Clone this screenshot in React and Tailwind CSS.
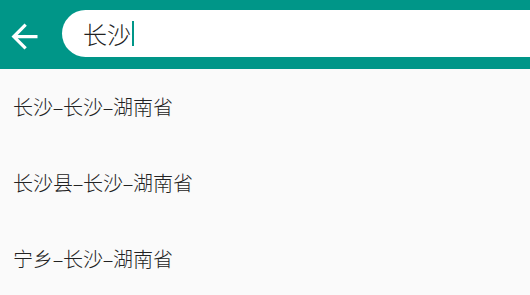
import React from "react";

const rows = [
  ["长沙", "长沙", "湖南省"],
  ["长沙县", "长沙", "湖南省"],
  ["宁乡", "长沙", "湖南省"],
];

function Dash() {
  return <span className="inline-block w-[10px] text-center scale-x-[1.8]">-</span>;
}

export default function App() {
  return (
    <div
      className="w-[530px] h-[295px] overflow-hidden bg-[#fafafa]"
      style={{ fontFamily: '"Noto Sans CJK SC", "Noto Sans", sans-serif' }}
    >
      <div className="h-[69px] bg-[#009688] flex items-center">
        <div className="w-[62px] h-full flex items-center pl-[5px]">
          <svg width="39" height="39" viewBox="0 0 24 24" fill="#ffffff" className="mt-[3px]">
            <path d="M20 11H7.83l5.59-5.59L12 4l-8 8 8 8 1.41-1.41L7.83 13H20v-2z" />
          </svg>
        </div>
        <div className="flex-1 h-[47px] mt-[-2px] bg-white rounded-l-[24px] flex items-center pl-[21px]">
          <span className="text-[24px] leading-none font-light text-[#222222]">长沙</span>
          <span className="w-[2px] h-[25px] bg-[#009688] ml-[1px]" />
        </div>
      </div>
      <div className="flex flex-col">
        {rows.map((r) => (
          <div
            key={r.join("-")}
            className="h-[76px] flex items-center pl-[13px] text-[20px] leading-none font-light text-[#222222]"
          >
            <span>
              {r[0]}
              <Dash />
              {r[1]}
              <Dash />
              {r[2]}
            </span>
          </div>
        ))}
      </div>
    </div>
  );
}
